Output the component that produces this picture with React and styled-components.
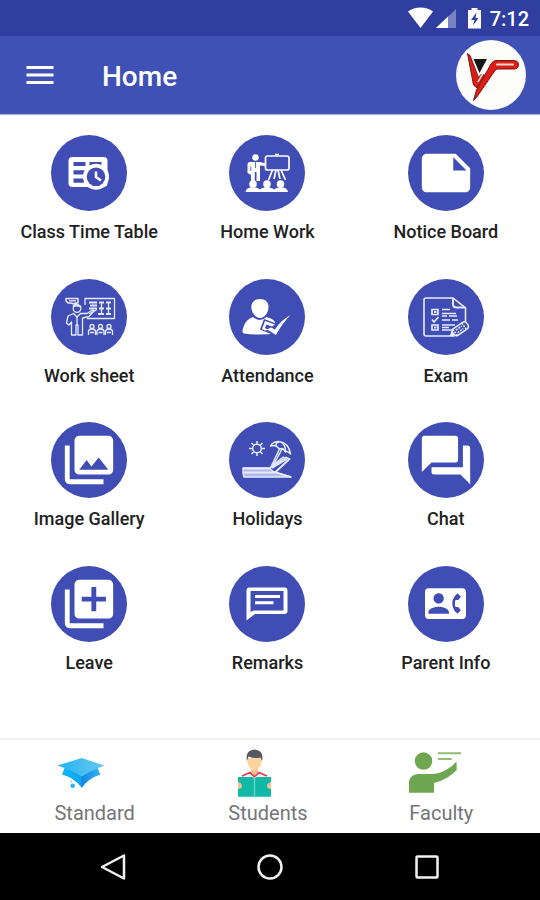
import styled, { createGlobalStyle } from "styled-components";
import {
  MdMenu,
  MdNote,
  MdPhotoLibrary,
  MdForum,
  MdLibraryAdd,
  MdContactPhone,
} from "react-icons/md";

const GlobalStyle = createGlobalStyle`
  * {
    box-sizing: border-box;
  }

  body {
    margin: 0;
    background: #ffffff;
    font-family: Roboto, "Liberation Sans", sans-serif;
  }

  button {
    margin: 0;
    padding: 0;
    border: none;
    background: none;
    font-family: inherit;
    cursor: pointer;
  }

  svg {
    display: block;
  }
`;

const Screen = styled.div`
  display: flex;
  flex-direction: column;
  min-height: 100vh;
  background: #ffffff;
`;

const StatusBar = styled.div`
  display: flex;
  justify-content: flex-end;
  align-items: center;
  gap: 8px;
  height: 36px;
  padding: 2px 11px 0 0;
  background: #303f9f;
  color: white;
`;

const Clock = styled.time`
  font-size: 20px;
  font-weight: 500;
  line-height: 24px;
`;

const AppBar = styled.header`
  display: flex;
  align-items: center;
  height: 78px;
  padding: 0 14px 0 22px;
  background: #3f51b5;
  color: white;
  box-shadow: 0 1px 1px rgba(63, 81, 181, 0.4);
`;

const MenuButton = styled.button`
  color: white;
`;

const Title = styled.h1`
  flex: 1;
  margin: 0;
  padding: 4px 0 0 44px;
  font-size: 28px;
  font-weight: 500;
  line-height: 32px;
`;

const Avatar = styled.button`
  width: 70px;
  height: 70px;
  border-radius: 50%;
  background: #fdfdfb;
`;

const Menu = styled.main`
  flex: 1;
  display: grid;
  grid-template-columns: repeat(3, 1fr);
  grid-auto-rows: 1fr;
  padding: 21px 5px 29px 0;
`;

const Tile = styled.button`
  display: flex;
  flex-direction: column;
  align-items: center;
  gap: 9px;
  color: #212121;
  font-size: 18px;
  font-weight: 500;
  line-height: 24px;
`;

const Disc = styled.span`
  display: flex;
  justify-content: center;
  align-items: center;
  width: 76px;
  height: 76px;
  border-radius: 50%;
  background: #3f4db5;
  color: white;
`;

const Tabs = styled.nav`
  display: grid;
  grid-template-columns: repeat(3, 1fr);
  height: 95px;
  padding: 9px 12px 0 8px;
  border-top: 2px solid #f0f0f0;
`;

const Tab = styled.button`
  display: flex;
  flex-direction: column;
  justify-self: center;
  align-items: flex-start;
  gap: 4px;
  color: #757575;
  font-size: 20px;
  line-height: 24px;
`;

const SystemBar = styled.footer`
  display: grid;
  grid-template-columns: repeat(3, 1fr);
  justify-items: center;
  align-items: center;
  height: 67px;
  padding: 0 34px;
  background: #000000;
`;

const BLUE = "#3f4db5";

const StatusIcons = () => (
  <svg width="74" height="24" viewBox="0 0 74 24" fill="white">
    <path d="M0 4.500C7 -1 18 -1 25 4.500L12.500 21Z" />
    <path d="M48 2V21H28Z" opacity="0.35" />
    <path d="M40 9.500V21H28Z" />
    <path d="M60 3H63.500V1H69.500V3H73V21.500H60Z" />
    <path d="M68.500 5.500L63 13H66.500L65 18.500L70.500 11H67.500Z" fill="#303f9f" />
  </svg>
);

const Logo = () => (
  <svg width="70" height="70" viewBox="0 0 70 70">
    <path d="M17.500 19H31L23.500 33Z" fill="#151515" />
    <path
      d="M11.500 13.500L14 15.500L22.500 37.500L25 34.500L28.500 35L21 48L17.500 45Z"
      fill="#dd1d16"
      stroke="#7a1812"
      strokeWidth="1"
    />
    <path
      d="M17.500 60.500L20.500 50L35 24Q37 20.500 40 20.500H57.500Q62.500 20.500 62.500 24.800Q62.500 29 57.500 29H42Q40 29 39 30.500L20.500 57.500Z"
      fill="#dd1d16"
      stroke="#7a1812"
      strokeWidth="1"
    />
    <path d="M41 24.500H57" stroke="#f6d9d2" strokeWidth="2.200" strokeLinecap="round" />
    <path d="M34 21L22 42" stroke="#fdfdfb" strokeWidth="1.500" />
  </svg>
);

const TimeTableIcon = () => (
  <svg width="76" height="76" viewBox="0 0 76 76">
    <rect x="17.500" y="22" width="39" height="30" rx="4" fill="white" />
    <path
      d="M22.500 27H34.500V31H22.500ZM38.500 27H50.500V31H38.500ZM22.500 35.200H34.500V39.400H22.500ZM22.500 43.600H33V47.800H22.500Z"
      fill={BLUE}
    />
    <circle cx="45" cy="41.800" r="13" fill="white" />
    <circle cx="45" cy="41.800" r="9.300" fill={BLUE} />
    <path d="M45 36.500V42L50 45.500" fill="none" stroke="white" strokeWidth="2.500" />
  </svg>
);

const HomeWorkIcon = () => (
  <svg width="76" height="76" viewBox="0 0 76 76" fill="white">
    <circle cx="26.500" cy="22.500" r="3.200" />
    <path d="M21 27H31L37 28.500V31L31 30.500V46H27.500V37H25.800V46H22V40L18.500 38V30Q18.500 27 21 27Z" />
    <path d="M26.500 27V33M21.800 31.500V36" stroke={BLUE} strokeWidth="0.800" />
    <g fill="none" stroke="white" strokeWidth="1.700">
      <rect x="36.500" y="21" width="23.500" height="14" rx="2" />
      <path d="M46 19.500H50M43.500 35L39.500 45M47 35L45 44M49 35L51 44M52 35L56.500 45" />
    </g>
    <g>
      <circle cx="24" cy="49" r="3.800" />
      <circle cx="38" cy="49" r="3.800" />
      <circle cx="51.500" cy="49" r="3.800" />
      <path d="M16.500 57Q17 52.500 24 52Q29 52.500 31 54.500Q33 52.500 38 52Q43 52.500 45 54.500Q47 52.500 51.500 52Q58.500 52.500 59 57Z" />
    </g>
  </svg>
);

const WorkSheetIcon = () => (
  <svg
    width="76"
    height="76"
    viewBox="0 0 76 76"
    fill="none"
    stroke="#e6ebff"
    strokeWidth="1.300"
    strokeLinejoin="round"
  >
    <path d="M34 26V19.500H63.500V39.500H36" />
    <path d="M38 23.500H46M39 26.500H46M38 29.500H46M48 23.500H53M55 23.500H60M48 29.500H53M55 29.500H60M47 35H53M55 35H60" strokeWidth="2" />
    <path d="M50.500 23.500V35M57.500 24V35" />
    <path d="M15 19.500H27V24H24L26 26L20 24H17L15 22Z" strokeWidth="1.500" />
    <path d="M18 21.800H25" />
    <circle cx="26" cy="29.500" r="3.800" />
    <path d="M22 27.500Q26 25 30 28" strokeWidth="2" />
    <path d="M22.500 34.500L17 37L15.500 44L18 46L20.500 43V56H25V46H27V56H31.500V39L38 37.500L43 32L41.500 31L36 34.500L29.500 34.500L26 38Z" />
    <path d="M26 38V46M38 35L46 30.500" />
    <path d="M37.500 56V52Q38 50 41 50Q44 50 44.500 52V56M46 56V52Q46.500 50 49.500 50Q52.500 50 53 52V56M54.500 56V52Q55 50 58 50Q61 50 61.500 52V56M39 53.500H43M47.500 53.500H51.500M56 53.500H60" />
    <circle cx="41" cy="47.500" r="2" />
    <circle cx="49.500" cy="47.500" r="2" />
    <circle cx="58" cy="47.500" r="2" />
  </svg>
);

const AttendanceIcon = () => (
  <svg width="76" height="76" viewBox="0 0 76 76" fill="white">
    <path d="M31 20C36.500 20 39.500 23.500 39.500 28C39.500 33.500 35.500 39 31 39C26.500 39 22.300 33.500 22.300 28C22.300 23.500 25.500 20 31 20Z" />
    <path d="M24 38Q31 44 37.500 38Q44 39.500 46 43L47 54.500Q30 56.500 15 54.500Q12.500 54 14 49.500Q16 40.500 24 38Z" />
    <path d="M35 40L46 44L50 42L47 56L42 55L31 50.500Z" fill={BLUE} />
    <path d="M36 42L46 45.500L43 47.500L37.500 45.500L36 49L39 51L36 51.500L33 50Z" />
    <path d="M38 50.500L42 48.500L46 50.500Q51 42 61.500 36Q53 44.500 47 56Z" />
  </svg>
);

const ExamIcon = () => (
  <svg width="76" height="76" viewBox="0 0 76 76" fill="none" stroke="#e6ebff">
    <path d="M46 57H18Q16 57 16 55V21Q16 19 18 19H45L57.500 29V44" strokeWidth="1.600" />
    <path d="M45 19V25Q45 28.500 48.500 28.500H57.500" strokeWidth="2" />
    <path d="M24 30.500H30V35.500H24ZM24 46H30V51H24Z" strokeWidth="1.700" />
    <path d="M26 33H28.500M26 48.500H28.500" strokeWidth="2" />
    <path d="M24 40.500L26 43L30.500 38" strokeWidth="1.600" />
    <path
      d="M34 30.500H42M34 34.500H48M34 37H39M41 37H49M34 41H42M44 41H50M34 46H47M34 48.500H41M34 51H44"
      strokeWidth="1.500"
    />
    <g transform="rotate(-35 52 50)" strokeWidth="1.500">
      <path d="M46 46H58Q61 46 61 50Q61 54 58 54H46L41 50Z" fill={BLUE} />
      <path d="M46 46V54M57 46V54M48 48.500H55M48 51.500H55" strokeDasharray="2 1" />
      <path d="M41 50L44 48V52Z" fill="white" />
    </g>
  </svg>
);

const HolidaysIcon = () => (
  <svg
    width="76"
    height="76"
    viewBox="0 0 76 76"
    fill="none"
    stroke="#e6ebff"
    strokeWidth="1.500"
    strokeLinejoin="round"
  >
    <circle cx="28" cy="26.500" r="4.300" />
    <path d="M28 19V22M28 31V34M20 26.500H23M33 26.500H36M22.500 21L24.500 23M33.500 21L31.500 23M22.500 32L24.500 30M33.500 32L31.500 30" />
    <path d="M41.500 24Q44 19.500 50 19.500Q60 21 61.500 32Q58.500 28.500 56.500 30Q54.500 25.500 50.500 27Q46.500 22 41.500 24Z" />
    <path d="M50 20Q46 21 47.500 24M52 20Q56.500 23 56.500 29M50.500 27L41 47M53 27L44 44" />
    <path d="M14 46H40L45 50L62 55H15L14 51Z" fill="#aeb6e4" />
    <path d="M14 46.500H40L57 35.500L60.500 37L46 50.500H15" strokeWidth="1.800" />
    <path d="M43 46L58 37M46 50L62 55M44 43L53 36Q56 34 55 38" />
  </svg>
);

// wider than the stock chat glyph
const RemarksIcon = () => (
  <svg width="76" height="76" viewBox="0 0 76 76">
    <path
      d="M20.500 21.500H55.500Q58.500 21.500 58.500 24.500V45Q58.500 48 55.500 48H26L17.500 54.500V24.500Q17.500 21.500 20.500 21.500ZM21.500 25V46L24.500 44.500H54.500V25Z"
      fill="white"
      fillRule="evenodd"
    />
    <path d="M26 30.500H51M26 36.800H44.500" stroke="white" strokeWidth="3" />
  </svg>
);

const StandardIcon = () => (
  <svg width="52" height="48" viewBox="0 0 52 48">
    <defs>
      <linearGradient id="capTop" x1="0" y1="0" x2="1" y2="0">
        <stop offset="0" stopColor="#1fb4f2" />
        <stop offset="1" stopColor="#6cc7f0" />
      </linearGradient>
      <linearGradient id="capBase" x1="0" y1="0" x2="1" y2="0">
        <stop offset="0" stopColor="#12b7f8" />
        <stop offset="0.500" stopColor="#0fa4f0" />
        <stop offset="0.510" stopColor="#1687e0" />
        <stop offset="1" stopColor="#2bb5f5" />
      </linearGradient>
    </defs>
    <path d="M11 18L8 25.500Q20 28.500 27.700 38.700Q35 29 46.500 25.500L43 18Z" fill="url(#capBase)" />
    <path d="M3.500 16.500L27.700 9L50.500 16.500Q38 21 27.700 27.500Q17 21 3.500 16.500Z" fill="url(#capTop)" />
    <circle cx="18.700" cy="36.700" r="2.300" fill="#2db6f2" />
    <path d="M17 31V34" stroke="#7fd2f6" strokeWidth="1" />
  </svg>
);

const StudentsIcon = () => (
  <svg width="52" height="48" viewBox="0 0 52 48">
    <path d="M14 28Q16 24 22 23H31Q37 24 39.500 28Z" fill="#f3eef0" />
    <path d="M14 27L22 23.500L26.500 27.500L31 23.500L39 27" fill="none" stroke="#e0405c" strokeWidth="1.800" />
    <path d="M23 18H30V23L26.500 26.500L23 23Z" fill="#f3bd83" />
    <path d="M19.500 9H33.500Q34 15 31.500 18Q29 22 26.500 22Q24 22 21.500 18Q19 15 19.500 9Z" fill="#fdd3a0" />
    <path d="M19 12Q17.500 5 21.500 2Q26.500 -1 31.500 2Q35.500 5 34 12L32.500 8.500Q26.500 10 20.500 7.500Z" fill="#555860" />
    <path d="M10 28H24L26.500 29L29 28H43V47.700H10Z" fill="#12b8a6" />
    <path d="M26.500 29V47.700" stroke="#62d3c7" strokeWidth="1.500" />
    <path d="M10 33Q14 34 14 37Q14 39.500 10 40ZM43 33Q39 34 39 37Q39 39.500 43 40Z" fill="#efc394" />
  </svg>
);

const FacultyIcon = () => (
  <svg width="52" height="48" viewBox="0 0 52 48" fill="#6fa650">
    <circle cx="14.500" cy="12" r="8.700" />
    <path d="M0 43.700V33Q1 25.500 9 25H24Q34 24 43 17L47.500 12.500L47.700 21Q39 30.500 25 34V43.700Z" />
    <path d="M29 4.300H52M29 10H42.700" stroke="#8fbd76" strokeWidth="2" />
  </svg>
);

const tiles = [
  { label: "Class Time Table", icon: <TimeTableIcon /> },
  { label: "Home Work", icon: <HomeWorkIcon /> },
  { label: "Notice Board", icon: <MdNote size={58} /> },
  { label: "Work sheet", icon: <WorkSheetIcon /> },
  { label: "Attendance", icon: <AttendanceIcon /> },
  { label: "Exam", icon: <ExamIcon /> },
  { label: "Image Gallery", icon: <MdPhotoLibrary size={58} /> },
  { label: "Holidays", icon: <HolidaysIcon /> },
  { label: "Chat", icon: <MdForum size={58} /> },
  { label: "Leave", icon: <MdLibraryAdd size={58} /> },
  { label: "Remarks", icon: <RemarksIcon /> },
  { label: "Parent Info", icon: <MdContactPhone size={41} /> },
];

const tabs = [
  { label: "Standard", icon: <StandardIcon /> },
  { label: "Students", icon: <StudentsIcon /> },
  { label: "Faculty", icon: <FacultyIcon /> },
];

const systemKeys = [
  { name: "Back", shape: <path d="M25 2.500V25.500L3 14Z" /> },
  { name: "Home screen", shape: <circle cx="14" cy="14" r="11.500" /> },
  { name: "Recent apps", shape: <rect x="3.500" y="3.500" width="21" height="21" rx="1" /> },
];

const App = () => {
  return (
    <Screen>
      <GlobalStyle />
      <StatusBar>
        <StatusIcons />
        <Clock>7:12</Clock>
      </StatusBar>
      <AppBar>
        <MenuButton aria-label="Menu">
          <MdMenu size={36} />
        </MenuButton>
        <Title>Home</Title>
        <Avatar aria-label="Profile">
          <Logo />
        </Avatar>
      </AppBar>
      <Menu>
        {tiles.map(({ label, icon }) => (
          <Tile key={label}>
            <Disc>{icon}</Disc>
            {label}
          </Tile>
        ))}
      </Menu>
      <Tabs>
        {tabs.map(({ label, icon }) => (
          <Tab key={label}>
            {icon}
            {label}
          </Tab>
        ))}
      </Tabs>
      <SystemBar>
        {systemKeys.map(({ name, shape }) => (
          <button key={name} aria-label={name}>
            <svg
              width="28"
              height="28"
              viewBox="0 0 28 28"
              fill="none"
              stroke="#f2f2f2"
              strokeWidth="2.500"
              strokeLinejoin="round"
            >
              {shape}
            </svg>
          </button>
        ))}
      </SystemBar>
    </Screen>
  );
};

export default App;
